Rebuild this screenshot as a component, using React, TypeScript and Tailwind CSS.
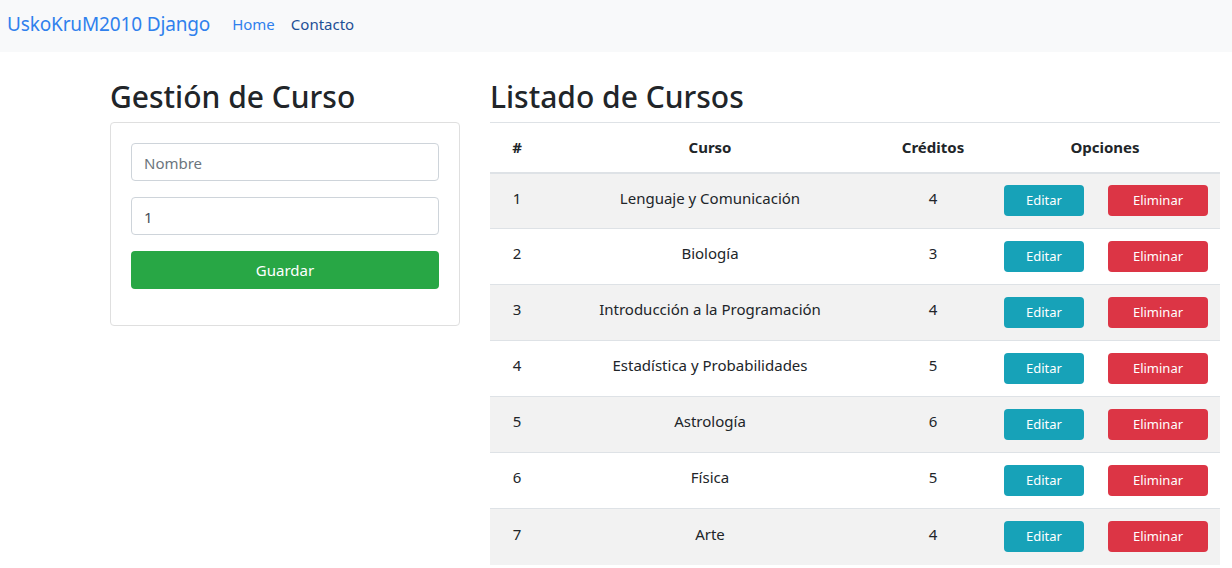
import React from "react";

const cursos = [
  { id: 1, nombre: "Lenguaje y Comunicación", creditos: 4 },
  { id: 2, nombre: "Biología", creditos: 3 },
  { id: 3, nombre: "Introducción a la Programación", creditos: 4 },
  { id: 4, nombre: "Estadística y Probabilidades", creditos: 5 },
  { id: 5, nombre: "Astrología", creditos: 6 },
  { id: 6, nombre: "Física", creditos: 5 },
  { id: 7, nombre: "Arte", creditos: 4 },
];

export default function App() {
  return (
    <div
      className="min-h-[568px] bg-white text-[#212529]"
      style={{ fontFamily: '"Segoe UI", "Noto Sans", "Open Sans", sans-serif' }}
    >
      <nav className="h-[52px] bg-[#f8f9fa] flex items-center pl-[7px] pb-[3px]">
        <span className="text-[19px] text-[#2f80ed] leading-none tracking-[-0.15px]">UskoKruM2010 Django</span>
        <a className="ml-[22px] text-[15px] text-[#2f80ed]">Home</a>
        <a className="ml-[16px] text-[15px] text-[#1e4f96]">Contacto</a>
      </nav>
      <div className="flex pl-[110px] pt-[26px] gap-[30px]">
        <div className="w-[350px] shrink-0">
          <h2 className="text-[30px] font-medium leading-[1.2] h-[44px] pt-[1px] mb-0">Gestión de Curso</h2>
          <div className="border border-[#dfdfdf] rounded-[4px] px-[20px] pt-[20px] pb-[36px] flex flex-col gap-[16px]">
            <input
              className="h-[38px] w-full border border-[#ced4da] rounded-[4px] px-[12px] pt-[2px] text-[15px] placeholder:text-[#6c757d] outline-none"
              placeholder="Nombre"
            />
            <input
              className="h-[38px] w-full border border-[#ced4da] rounded-[4px] px-[12px] pt-[2px] text-[15px] text-[#495057] outline-none"
              defaultValue="1"
            />
            <button className="h-[38px] w-full rounded-[4px] bg-[#28a745] text-white text-[15px]">Guardar</button>
          </div>
        </div>
        <div className="w-[730px] shrink-0">
          <h2 className="text-[30px] font-medium leading-[1.2] h-[44px] pt-[1px] mb-0">Listado de Cursos</h2>
          <table className="w-full border-collapse text-[15px] table-fixed">
            <colgroup>
              <col className="w-[54px]" />
              <col className="w-[332px]" />
              <col className="w-[114px]" />
              <col className="w-[230px]" />
            </colgroup>
            <thead>
              <tr className="h-[50px] border-t border-[#dee2e6] border-b-2">
                <th className="font-bold text-center align-middle">#</th>
                <th className="font-bold text-center align-middle">Curso</th>
                <th className="font-bold text-center align-middle">Créditos</th>
                <th className="font-bold text-center align-middle">Opciones</th>
              </tr>
            </thead>
            <tbody>
              {cursos.map((c, i) => (
                <tr
                  key={c.id}
                  className={`h-[56px] border-t border-[#dee2e6] ${i % 2 === 0 ? "bg-[#f2f2f2]" : "bg-white"}`}
                >
                  <td className="text-center align-middle pb-[6px]">{c.id}</td>
                  <td className="text-center align-middle pb-[6px]">{c.nombre}</td>
                  <td className="text-center align-middle pb-[6px]">{c.creditos}</td>
                  <td className="align-middle">
                    <div className="flex items-center pl-[14px] gap-[24px]">
                      <button className="w-[80px] h-[31px] rounded-[4px] bg-[#17a2b8] text-white text-[13px]">Editar</button>
                      <button className="w-[100px] h-[31px] rounded-[4px] bg-[#dc3545] text-white text-[13px]">Eliminar</button>
                    </div>
                  </td>
                </tr>
              ))}
            </tbody>
          </table>
        </div>
      </div>
    </div>
  );
}
